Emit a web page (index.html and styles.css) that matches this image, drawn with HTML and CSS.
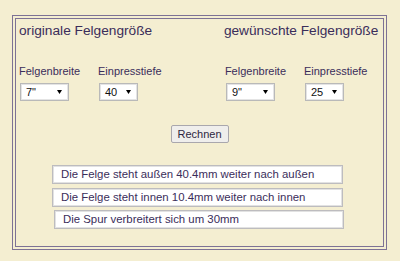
FILE: index.html
```html
<!DOCTYPE html>
<html lang="de">
<head>
<meta charset="utf-8">
<title>Felgenrechner</title>
<link rel="stylesheet" href="styles.css">
</head>
<body>
<div class="panel">
  <div class="cols">
    <section class="col">
      <h2 class="title">originale Felgengröße</h2>
      <div class="fields">
        <div class="field">
          <div class="label">Felgenbreite</div>
          <div class="sel sel-wide"><span>7"</span><svg class="arrow" width="5" height="4" viewBox="0 0 5 4"><path d="M0 0H5L2.5 4Z" fill="#000"/></svg></div>
        </div>
        <div class="field">
          <div class="label">Einpresstiefe</div>
          <div class="sel sel-narrow"><span>40</span><svg class="arrow" width="5" height="4" viewBox="0 0 5 4"><path d="M0 0H5L2.5 4Z" fill="#000"/></svg></div>
        </div>
      </div>
    </section>
    <section class="col col-right">
      <h2 class="title">gewünschte Felgengröße</h2>
      <div class="fields fields-right">
        <div class="field">
          <div class="label">Felgenbreite</div>
          <div class="sel sel-wide"><span>9"</span><svg class="arrow" width="5" height="4" viewBox="0 0 5 4"><path d="M0 0H5L2.5 4Z" fill="#000"/></svg></div>
        </div>
        <div class="field">
          <div class="label">Einpresstiefe</div>
          <div class="sel sel-narrow"><span>25</span><svg class="arrow" width="5" height="4" viewBox="0 0 5 4"><path d="M0 0H5L2.5 4Z" fill="#000"/></svg></div>
        </div>
      </div>
    </section>
  </div>
  <div class="actions"><button class="btn" type="button">Rechnen</button></div>
  <div class="results">
    <div class="result">Die Felge steht außen 40.4mm weiter nach außen</div>
    <div class="result">Die Felge steht innen 10.4mm weiter nach innen</div>
    <div class="result result-last">Die Spur verbreitert sich um 30mm</div>
  </div>
</div>
</body>
</html>
```
FILE: styles.css
```css
html, body {
  margin: 0;
  padding: 0;
}
body {
  background: #f4eed1;
  font-family: "Liberation Sans", Arial, sans-serif;
  color: #3a2d5a;
  width: 400px;
  height: 261px;
  overflow: hidden;
}
.panel {
  box-sizing: border-box;
  margin: 15px 0 0 12px;
  width: 375px;
  height: 235px;
  border: 4px double #7d7295;
  padding: 4px 0 0 3px;
}
.cols {
  display: flex;
}
.col {
  width: 206px;
}
.col-right {
  width: 160px;
}
.title {
  margin: 0;
  font-weight: normal;
  font-size: 13.7px;
  line-height: 16px;
  white-space: nowrap;
}
.fields {
  display: flex;
  margin-top: 26px;
}
.fields-right {
  margin-left: 1px;
}
.field {
  width: 79px;
}
.label {
  font-size: 11px;
  line-height: 13px;
  white-space: nowrap;
}
.sel {
  box-sizing: border-box;
  margin: 5px 0 0 1px;
  height: 18px;
  display: flex;
  align-items: center;
  justify-content: space-between;
  padding: 0 6px 0 5px;
  background: #fff;
  border: 1px solid #b9b9b9;
  box-shadow: inset 0 0 0 1px #e4e4e4;
  font-size: 11px;
  color: #111;
}
.sel-wide {
  width: 49px;
}
.sel-narrow {
  width: 39px;
}
.arrow {
  display: block;
}
.actions {
  display: flex;
  justify-content: center;
  margin-top: 24px;
  padding-right: 3px;
}
.btn {
  box-sizing: border-box;
  width: 58px;
  height: 18px;
  padding: 0;
  margin: 0;
  font-family: "Liberation Sans", Arial, sans-serif;
  font-size: 11px;
  color: #2e2640;
  background: #efeeec;
  border: 1px solid #a9a7ad;
  border-radius: 2px;
}
.results {
  margin-top: 22px;
  margin-left: 33px;
  display: flex;
  flex-direction: column;
  gap: 4px;
}
.result {
  box-sizing: border-box;
  width: 291px;
  height: 19px;
  padding: 0 0 0 8px;
  background: #fff;
  border: 1px solid #bdbcbf;
  box-shadow: inset 0 0 0 1px #e2e2e2;
  font-size: 11.4px;
  line-height: 17px;
  white-space: nowrap;
}
.result-last {
  margin-top: -1px;
  margin-left: 2px;
  width: 290px;
}
```
